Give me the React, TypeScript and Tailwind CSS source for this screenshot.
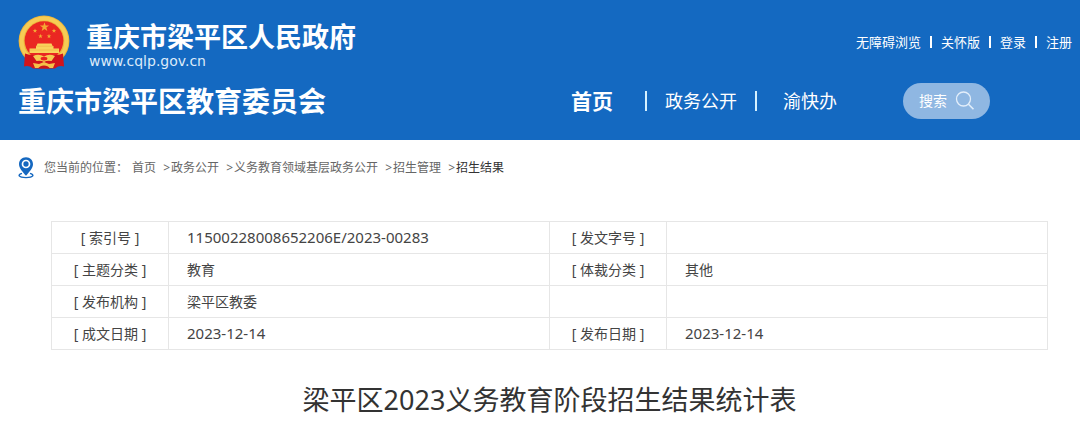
import { Fragment } from 'react'

interface NavLink {
  label: string
  href: string
}

interface InfoField {
  label: string
  value: string
}

const userLinks: NavLink[] = [
  { label: '无障碍浏览', href: '#accessible' },
  { label: '关怀版', href: '#care' },
  { label: '登录', href: '#login' },
  { label: '注册', href: '#register' },
]

const breadcrumbs: NavLink[] = [
  { label: '首页', href: '#home' },
  { label: '政务公开', href: '#open' },
  { label: '义务教育领域基层政务公开', href: '#education' },
  { label: '招生管理', href: '#enrolment' },
  { label: '招生结果', href: '#result' },
]

// Two label/value pairs per table row
const infoRows: [InfoField, InfoField][] = [
  [
    { label: '索引号', value: '11500228008652206E/2023-00283' },
    { label: '发文字号', value: '' },
  ],
  [
    { label: '主题分类', value: '教育' },
    { label: '体裁分类', value: '其他' },
  ],
  [
    { label: '发布机构', value: '梁平区教委' },
    { label: '', value: '' },
  ],
  [
    { label: '成文日期', value: '2023-12-14' },
    { label: '发布日期', value: '2023-12-14' },
  ],
]

// Codes and dates are set one size up from Chinese text
const isNumeric = (value: string) => /^\d/.test(value)

const STAR = 'M0 -1 L0.235 -0.324 L0.951 -0.309 L0.38 0.124 L0.588 0.809 L0 0.4 L-0.588 0.809 L-0.38 0.124 L-0.951 -0.309 L-0.235 -0.324 Z'

function Emblem() {
  return (
    <svg viewBox="0 0 52 54" className="h-[54px] w-[52px] shrink-0" aria-hidden="true">
      <circle cx="26" cy="26" r="25.4" fill="#eeb53a" />
      <circle cx="26" cy="26" r="22.4" fill="none" stroke="#f6cc55" strokeWidth="4" />
      <circle cx="26" cy="25.6" r="19.4" fill="#ea2722" />
      <g fill="#f4a834">
        <path d={STAR} transform="translate(26.5 12) scale(4.8)" />
        <path d={STAR} transform="translate(17 15.8) scale(2.4)" />
        <path d={STAR} transform="translate(36 15.8) scale(2.4)" />
        <path d={STAR} transform="translate(22.5 21.2) scale(2.4)" />
        <path d={STAR} transform="translate(31 21.2) scale(2.4)" />
      </g>
      <path d="M19.5 28.5 H33.5 L34.5 31 H35.5 V33.5 H41 V38 H11.5 V33.5 H18 V31 H18.5 Z" fill="#f9d35c" />
      <path d="M18 31.2 H35 M12 35 H40.5" stroke="#efb040" strokeWidth="0.6" />
      <path d="M7 38.5 Q12 40.5 18 40 L26 43 L34 40 Q40 40.5 45 38.5 L46 51.5 Q41 50 37 53.5 H15 Q11 50 6 51.5 Z" fill="#d2141b" />
      <path d="M15 41 Q21 38.5 26 41.5 Q31 38.5 37 41 L33.5 46 Q29 45 26 47 Q23 45 18.5 46 Z" fill="#f7ca50" />
      <ellipse cx="26" cy="43.6" rx="3.4" ry="1.9" fill="#e9251f" />
      <path d="M15 48 L21 49 L26 47 L31 49 L37 48 L35 53 H17 Z" fill="#f5c048" />
      <path d="M20 53.5 Q22 50.5 26 50.5 Q30 50.5 32 53.5 Z" fill="#c9151a" />
    </svg>
  )
}

function PinIcon() {
  return (
    <svg viewBox="0 0 16 22" className="h-[22px] w-4 shrink-0" fill="none" aria-hidden="true">
      <path d="M4 16.4 C-0.5 17.6 0 20.6 8 20.6 C16 20.6 16.5 17.6 12 16.4" stroke="#1568c0" strokeWidth="1.4" />
      <path
        d="M8 0.3 C3.8 0.3 1 3.4 1 7.2 C1 11.5 5 14.8 8 18.8 C11 14.8 15 11.5 15 7.2 C15 3.4 12.2 0.3 8 0.3 Z"
        fill="#1568c0"
      />
      <circle cx="8" cy="7" r="3.5" stroke="#fff" strokeWidth="1.7" />
    </svg>
  )
}

function SearchIcon() {
  return (
    <svg viewBox="0 0 20 20" className="size-5" fill="none" stroke="#e3eefa" strokeWidth="1.3" aria-hidden="true">
      <circle cx="8.5" cy="8" r="7" />
      <path d="M13.5 13.3 L18.5 18.3" strokeWidth="1.6" />
    </svg>
  )
}

function Header() {
  return (
    <header className="bg-[#1469c1] pt-[15px] pb-[21px] pl-[18px] text-white">
      <div className="flex items-start justify-between pr-2">
        <a href="#home" className="flex items-start gap-4">
          <Emblem />
          <span className="flex flex-col pt-2">
            <span className="text-[27px] leading-7 font-bold">重庆市梁平区人民政府</span>
            <span className="pl-[3px] font-['DejaVu_Sans'] text-sm leading-5 text-[#dcebfa]">www.cqlp.gov.cn</span>
          </span>
        </a>
        <ul className="flex items-center gap-[9px] pt-[17px] text-[13px] leading-5">
          {userLinks.map((link, i) => (
            <Fragment key={link.label}>
              {i > 0 && <li className="h-3 w-0.5 bg-white" aria-hidden="true" />}
              <li>
                <a href={link.href}>{link.label}</a>
              </li>
            </Fragment>
          ))}
        </ul>
      </div>

      <div className="mt-3 flex items-center justify-between pr-[90px]">
        <div className="text-[28px] leading-9 font-bold">重庆市梁平区教育委员会</div>
        <nav className="flex items-center text-lg">
          <a href="#home" className="text-[21px] font-bold">
            首页
          </a>
          <span className="mr-[18px] ml-8 h-5 w-0.5 bg-[#d5f1ff]" />
          <a href="#open">政务公开</a>
          <span className="mr-[26px] ml-[18px] h-5 w-0.5 bg-[#d5f1ff]" />
          <a href="#service">渝快办</a>
          <button
            type="button"
            className="ml-[66px] flex h-9 items-center gap-2 rounded-full bg-[#8fb7e2] pr-[15px] pl-4 text-sm"
          >
            搜索
            <SearchIcon />
          </button>
        </nav>
      </div>
    </header>
  )
}

function Breadcrumb() {
  return (
    <nav className="flex items-center gap-[10px] pt-[17px] pl-[18px] text-xs leading-5 text-[#666]">
      <PinIcon />
      <ol className="flex items-center">
        <li className="mr-1">{'您当前的位置\uff1a'}</li>
        {breadcrumbs.map((crumb, i) => (
          <li key={crumb.label} className="flex">
            {i > 0 && <span className="w-[15px] pr-px text-right">&gt;</span>}
            <a href={crumb.href} className={i === breadcrumbs.length - 1 ? 'text-[#333]' : ''}>
              {crumb.label}
            </a>
          </li>
        ))}
      </ol>
    </nav>
  )
}

function InfoTable() {
  return (
    <table className="w-full table-fixed border-collapse text-sm text-[#444]">
      <colgroup>
        <col className="w-[117px]" />
        <col />
        <col className="w-[117px]" />
        <col />
      </colgroup>
      <tbody>
        {infoRows.map((row, r) => (
          <tr key={r} className="h-8">
            {row.map((field, c) => (
              <Fragment key={c}>
                <th scope="row" className="border border-[#e6e6e6] font-normal">
                  {field.label && `[ ${field.label} ]`}
                </th>
                <td className={`border border-[#e6e6e6] pl-[18px] ${isNumeric(field.value) ? 'text-[15px]' : ''}`}>
                  {field.value}
                </td>
              </Fragment>
            ))}
          </tr>
        ))}
      </tbody>
    </table>
  )
}

export default function App() {
  return (
    <div className="min-h-screen bg-white font-['Noto_Sans','Noto_Sans_CJK_SC',sans-serif]">
      <Header />
      <Breadcrumb />
      <main className="pt-[42px] pr-8 pl-[51px]">
        <InfoTable />
        <h1 className="mt-[30px] text-center text-[27px] leading-10 text-[#333]">梁平区2023义务教育阶段招生结果统计表</h1>
      </main>
    </div>
  )
}
